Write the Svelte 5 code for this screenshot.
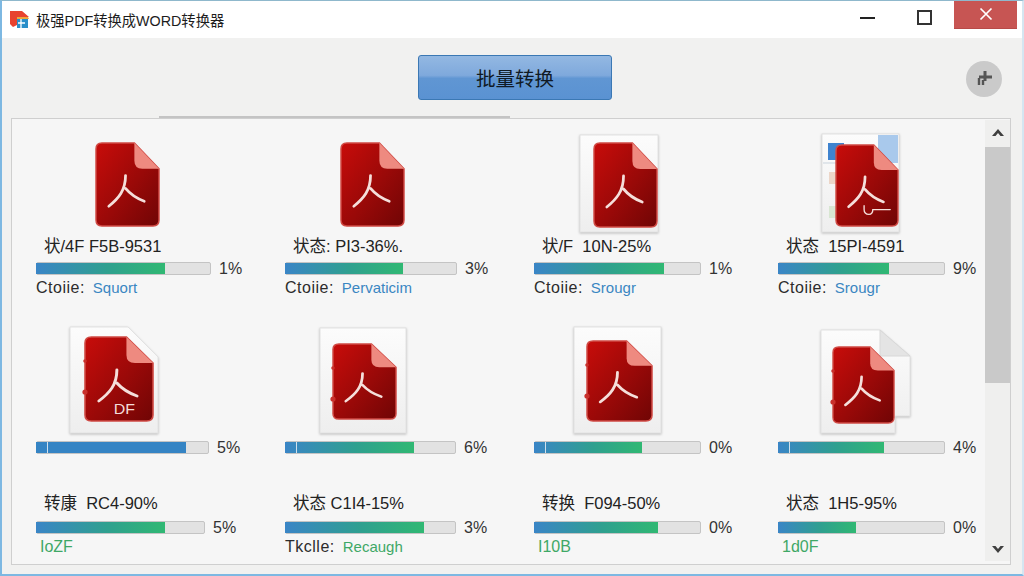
<script>
  // page coords were measured from the column/row origin, so icons use local x,y
  const topRow = [
    { doc: [60, 24, 63, 83], label: '状/4F F5B-9531', width: 175, fill: 129, pct: '1%', key: 'Ctoiie:', val: 'Squort', tone: 'blue' },
    { doc: [56, 24, 63, 83], label: '状态: PI3-36%.', width: 172, fill: 118, pct: '3%', key: 'Ctoiie:', val: 'Pervaticim', tone: 'blue' },
    { paper: [46, 16, 78, 97], doc: [60, 24, 63, 84], label: '状/F  10N-25%', width: 167, fill: 130, pct: '1%', key: 'Ctoiie:', val: 'Srougr', tone: 'blue' },
    { shot: [44, 15, 77, 98], doc: [58, 26, 62, 81], mark: true, label: '状态  15PI-4591', width: 167, fill: 111, pct: '9%', key: 'Ctoiie:', val: 'Srougr', tone: 'blue' }
  ];
  const midRow = [
    { paper: [34, 29, 88, 106], fold: 'cut', doc: [49, 39, 68, 84], df: true, width: 173, fill: 150, pct: '5%', solid: true },
    { paper: [35, 30, 86, 105], doc: [48, 46, 63, 75], width: 171, fill: 129, pct: '6%' },
    { paper: [40, 29, 87, 106], doc: [53, 43, 65, 80], width: 167, fill: 108, pct: '0%' },
    { paper: [43, 32, 89, 103], fold: 'step', doc: [55, 49, 61, 76], width: 167, fill: 106, pct: '4%' }
  ];
  const lowRow = [
    { label: '转康  RC4-90%', width: 169, fill: 129, pct: '5%', val: 'IoZF', tone: 'green' },
    { label: '状态 C1I4-15%', width: 171, fill: 139, pct: '3%', key: 'Tkclle:', val: 'Recaugh', tone: 'green' },
    { label: '转换  F094-50%', width: 167, fill: 124, pct: '0%', val: 'I10B', tone: 'green' },
    { label: '状态  1H5-95%', width: 167, fill: 78, pct: '0%', val: '1d0F', tone: 'green' }
  ];
</script>

{#snippet pdf(box, df, mark)}
  <g transform="translate({box[0]} {box[1]}) scale({box[2] / 64} {box[3] / 84})">
    <path class="doc" d="M6 0H39L64 26V78Q64 84 58 84H6Q0 84 0 78V6Q0 0 6 0Z" />
    <path class="corner" d="M39 0L64 26H47Q39 26 39 18Z" />
    <path class="person" d="M30 33C30 48 23 56 13 64M30 46C35 52 41 56 49 59" />
    {#if df}
      <text class="df" x="27" y="77">DF</text>
    {/if}
    {#if mark}
      <path class="person thin" d="M29 63V67Q29 72 34 72Q38 72 38 67H56" />
    {/if}
  </g>
{/snippet}

{#snippet sheet(box, fold)}
  <g transform="translate({box[0]} {box[1]})">
    {#if fold === 'step'}
      <path class="paper" d="M0 0H{box[2] - 30}L{box[2]} 26V{box[3] - 17}H{box[2] - 15}V{box[3]}H0Z" />
      <path class="paper-fold" d="M{box[2] - 30} 0L{box[2]} 26H{box[2] - 30}Z" />
    {:else if fold === 'cut'}
      <path class="paper" d="M0 0H{box[2] - 30}L{box[2]} 30V{box[3]}H0Z" />
    {:else}
      <rect class="paper" width={box[2]} height={box[3]} />
    {/if}
  </g>
{/snippet}

{#snippet capture(box)}
  <g transform="translate({box[0]} {box[1]})">
    <rect class="paper" width={box[2]} height={box[3]} />
    <rect x="6" y="9" width="16" height="17" fill="#3f83cf" />
    <rect x="56" y="1" width="20" height="28" fill="#a9c9ec" />
    <rect x="7" y="38" width="8" height="12" fill="#ecd6c8" />
    <rect x="7" y="72" width="9" height="12" fill="#d8e6d2" />
    <path d="M1 29H40" stroke="#c9d3dc" fill="none" />
  </g>
{/snippet}

{#snippet bar(item)}
  <div class="meter">
    <div class="track" style="width: {item.width}px">
      <div class="fill" class:solid={item.solid} class:notch={!item.label && !item.val} style="width: {item.fill}px"></div>
    </div>
    <span class="pct">{item.pct}</span>
  </div>
{/snippet}

{#snippet status(item)}
  <div class="status">
    {#if item.key}<span class="key">{item.key}</span>{/if}
    <span class={item.tone} class:inset={!item.key}>{item.val}</span>
  </div>
{/snippet}

<div class="window">
  <svg class="defs" aria-hidden="true">
    <defs>
      <linearGradient id="redDoc" x1="0" y1="0" x2="1" y2="1">
        <stop offset="0" stop-color="#c80c0a" />
        <stop offset="0.55" stop-color="#990908" />
        <stop offset="1" stop-color="#700505" />
      </linearGradient>
      <linearGradient id="paperFace" x1="0" y1="0" x2="0" y2="1">
        <stop offset="0" stop-color="#fcfcfc" />
        <stop offset="1" stop-color="#eeeeee" />
      </linearGradient>
    </defs>
  </svg>

  <header class="titlebar">
    <svg class="logo" width="20" height="20" viewBox="0 0 20 20">
      <path d="M0 2H12L19 8H7V16L3 18L0 15Z" fill="#e8432f" />
      <path d="M7 8H18L19 10H7Z" fill="#f0a63a" />
      <rect x="7" y="10" width="11" height="9" fill="#2a8fc9" />
      <path d="M11 10V19M8 14H15" stroke="#fff" stroke-width="1.3" />
    </svg>
    <span class="title">极强PDF转换成WORD转换器</span>
    <div class="controls">
      <span class="ctl min"></span>
      <span class="ctl max"></span>
      <button class="close" aria-label="关闭">
        <svg width="14" height="14" viewBox="0 0 14 14">
          <path d="M1.5 1.5L12.5 12.5M12.5 1.5L1.5 12.5" stroke="#fff" stroke-width="1.7" />
        </svg>
      </button>
    </div>
  </header>

  <section class="toolbar">
    <span></span>
    <button class="batch">批量转换</button>
    <button class="add" aria-label="添加">
      <svg width="20" height="20" viewBox="0 0 20 20">
        <path d="M11 2V12M5 8H18" stroke="#555" stroke-width="3" />
        <path d="M5 9V16M9 11V16" stroke="#555" stroke-width="2.4" />
      </svg>
    </button>
    <div class="edge"></div>
  </section>

  <main class="panel">
    <div class="list">
      {#each topRow as item}
        <div class="cell">
          <svg class="art top" viewBox="0 0 200 117">
            {#if item.paper}{@render sheet(item.paper, item.fold)}{/if}
            {#if item.shot}{@render capture(item.shot)}{/if}
            {@render pdf(item.doc, item.df, item.mark)}
          </svg>
          <div class="label">{item.label}</div>
          {@render bar(item)}
          {@render status(item)}
        </div>
      {/each}
      {#each midRow as item}
        <div class="cell">
          <svg class="art mid" viewBox="0 0 200 140">
            {#if item.paper}{@render sheet(item.paper, item.fold)}{/if}
            {@render pdf(item.doc, item.df, item.mark)}
            <circle cx={item.doc[0]} cy={item.doc[1] + 55} r="2.6" fill="#c9302c" />
            <circle cx={item.doc[0]} cy={item.doc[1] + 24} r="1.8" fill="#c9302c" />
          </svg>
          {@render bar(item)}
        </div>
      {/each}
      {#each lowRow as item}
        <div class="cell low">
          <div class="label">{item.label}</div>
          {@render bar(item)}
          {@render status(item)}
        </div>
      {/each}
    </div>

    <aside class="scrollbar">
      <svg class="arrow" width="12" height="8" viewBox="0 0 12 8"><path d="M6 0L12 7H8.5L6 4L3.5 7H0Z" fill="#3f3f3f" /></svg>
      <div class="thumb"></div>
      <svg class="arrow down" width="12" height="8" viewBox="0 0 12 8"><path d="M6 8L12 1H8.5L6 4L3.5 1H0Z" fill="#3f3f3f" /></svg>
    </aside>
  </main>
</div>

<style>
  :global(body) {
    background: #f0f0f0;
  }

  .window {
    position: relative;
    display: flex;
    flex-direction: column;
    box-sizing: border-box;
    width: 1024px;
    height: 576px;
    overflow: hidden;
    border: solid #7db8e2;
    border-width: 1px 2px 2px 2px;
    border-top-color: #8fb8cc;
    border-right-color: #d5e6f1;
    background: #f1f1f0;
    font-family: "Liberation Sans", "Noto Sans CJK SC", sans-serif;
    color: #222;
  }

  .defs {
    position: absolute;
    width: 0;
    height: 0;
  }

  .titlebar {
    display: flex;
    align-items: center;
    height: 37px;
    padding-left: 8px;
    background: #fff;
  }

  .logo {
    margin: -1px 6px 0 0;
  }

  .title {
    font-size: 14.3px;
    color: #1c1c1c;
  }

  .controls {
    display: flex;
    align-items: flex-start;
    align-self: stretch;
    margin-left: auto;
    margin-right: 5px;
  }

  .ctl {
    display: block;
    box-sizing: border-box;
  }

  .min {
    width: 15px;
    height: 2px;
    margin-top: 16px;
    background: #222;
  }

  .max {
    width: 15px;
    height: 15px;
    margin: 9px 0 0 42px;
    border: 2px solid #333;
  }

  .close {
    display: flex;
    align-items: center;
    justify-content: center;
    width: 63px;
    height: 28px;
    margin-left: 22px;
    padding: 0 0 2px;
    border: none;
    border-bottom: 1px solid #b84a48;
    background: #c75553;
  }

  .toolbar {
    position: relative;
    display: grid;
    grid-template-columns: 1fr 194px 1fr;
    align-items: start;
    height: 80px;
    padding: 17px 20px 0 26px;
    box-sizing: border-box;
  }

  .batch {
    height: 45px;
    padding: 0;
    border: 1px solid #3b78b4;
    border-radius: 3px;
    background: linear-gradient(#93b8e2 0%, #7fa9dc 45%, #6096d3 52%, #5a92d2 100%);
    font-family: inherit;
    font-size: 19.5px;
    color: #101a24;
  }

  .add {
    display: flex;
    align-items: center;
    justify-content: center;
    justify-self: end;
    width: 36px;
    height: 36px;
    margin-top: 6px;
    padding: 0;
    border: none;
    border-radius: 50%;
    background: #cacaca;
  }

  .edge {
    position: absolute;
    left: 157px;
    bottom: 0;
    width: 351px;
    height: 2px;
    background: #c4c4c4;
  }

  .panel {
    display: flex;
    box-sizing: border-box;
    width: 1000px;
    height: 447px;
    margin-left: 9px;
    border: 1px solid #cfcfcf;
    background: #f6f6f6;
  }

  .list {
    display: grid;
    grid-template-columns: 249px 249px 244px 1fr;
    grid-auto-rows: min-content;
    flex: 1;
    padding-left: 24px;
  }

  .cell {
    display: flex;
    flex-direction: column;
    min-width: 0;
  }

  .art {
    display: block;
    width: 200px;
  }

  .art.top {
    height: 117px;
  }

  .art.mid {
    height: 140px;
    margin-bottom: 3px;
  }

  .doc {
    fill: url(#redDoc);
    stroke: #d04a44;
    stroke-width: 1.5;
  }

  .corner {
    fill: #ee8a80;
  }

  .person {
    fill: none;
    stroke: #f5dfdb;
    stroke-width: 2.8;
    stroke-linecap: round;
  }

  .person.thin {
    stroke-width: 1.4;
  }

  .df {
    font-size: 15px;
    fill: #f3dcd8;
  }

  .paper {
    fill: url(#paperFace);
    stroke: #e2e2e2;
    filter: drop-shadow(0 1px 1px #bdbdbd);
  }

  .paper-fold {
    fill: #e4e4e4;
    stroke: #d8d8d8;
  }

  .label {
    height: 20px;
    padding-left: 8px;
    font-size: 16.5px;
    line-height: 20px;
    white-space: pre;
    color: #222;
  }

  .meter {
    display: flex;
    align-items: center;
    gap: 8px;
    height: 13px;
    margin-top: 6px;
  }

  .art + .meter {
    margin-top: 0;
  }

  .track {
    box-sizing: border-box;
    height: 13px;
    border: 1px solid #c4c4c4;
    border-radius: 2px;
    background: #e2e2e2;
  }

  .fill {
    position: relative;
    height: 100%;
    margin-left: -1px;
    background: linear-gradient(90deg, #3a85c6, #2fa08f 55%, #30b873);
  }

  .fill.solid {
    background: #3584c4;
  }

  .fill.notch::after {
    content: "";
    position: absolute;
    left: 11px;
    top: 0;
    width: 1px;
    height: 100%;
    background: #cfe0ee;
  }

  .pct {
    font-size: 16px;
    color: #333;
  }

  .status {
    display: flex;
    gap: 8px;
    height: 20px;
    margin-top: 3px;
    font-size: 15px;
    line-height: 20px;
    color: #2c2c2c;
  }

  .key {
    font-size: 16px;
    letter-spacing: 0.5px;
  }

  .blue {
    color: #3a86c2;
  }

  .green {
    color: #3fa866;
  }

  .inset {
    padding-left: 4px;
    font-size: 16px;
  }

  .low {
    padding-top: 39px;
  }

  .low .meter {
    margin-top: 8px;
  }

  .scrollbar {
    display: flex;
    flex-direction: column;
    align-items: center;
    width: 25px;
    height: 441px;
    margin: 1px 0 0;
    background: #efefee;
  }

  .arrow {
    margin: 9px 0 10px;
  }

  .thumb {
    align-self: stretch;
    height: 236px;
    background: #c9c9c9;
  }

  .arrow.down {
    margin: auto 0 8px;
  }
</style>
